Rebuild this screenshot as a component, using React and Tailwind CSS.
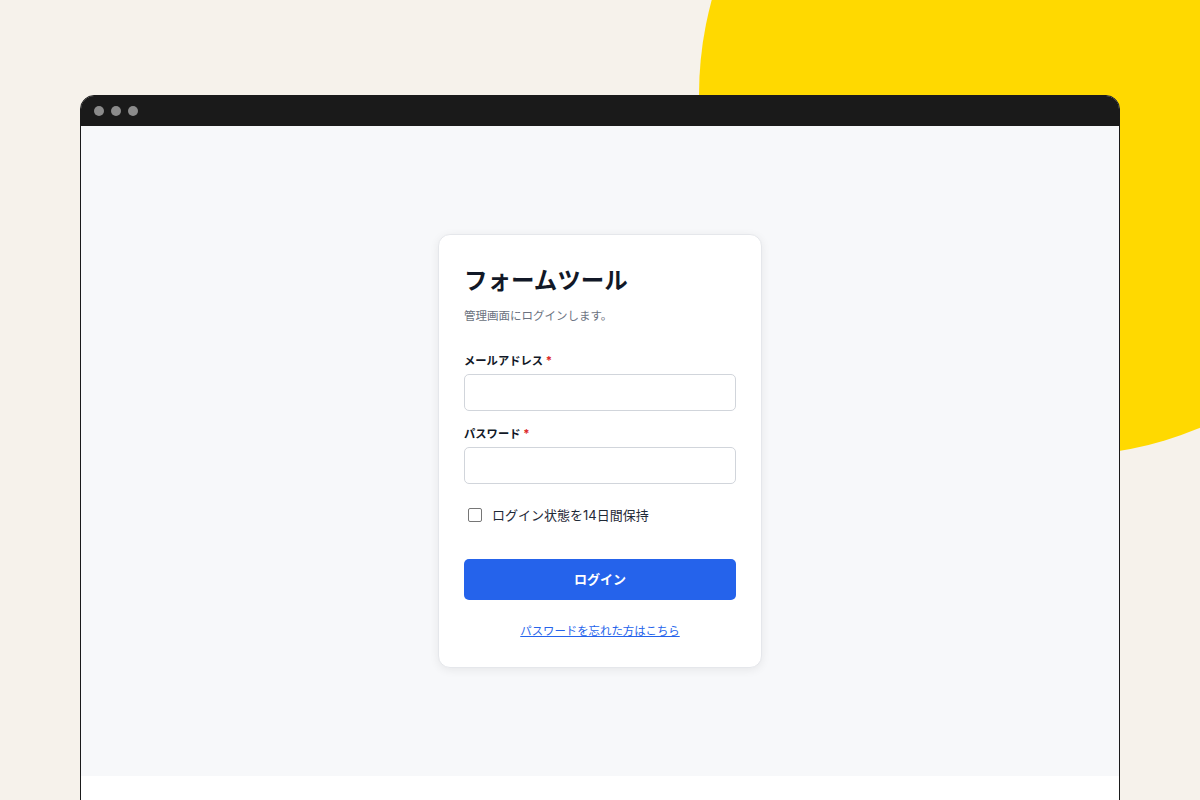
import React from 'react'

export default function App() {
  return (
    <div className="relative w-[1200px] h-[800px] overflow-hidden bg-[#f6f2eb]" style={{ fontFamily: 'Inter, "Noto Sans CJK JP", sans-serif' }}>
      {/* yellow blob */}
      <div className="absolute left-[699px] top-[-266px] w-[722px] h-[722px] rounded-full bg-[#ffd900]" />

      {/* browser window */}
      <div className="absolute left-[80px] top-[95px] w-[1040px] h-[760px] rounded-t-[14px] border border-[#1a1a1a] bg-white overflow-hidden">
        <div className="h-[30px] bg-[#1a1a1a] flex items-center gap-[7px] pl-[13px]">
          <span className="w-[10px] h-[10px] rounded-full bg-[#8b8b8b]" />
          <span className="w-[10px] h-[10px] rounded-full bg-[#8b8b8b]" />
          <span className="w-[10px] h-[10px] rounded-full bg-[#8b8b8b]" />
        </div>

        <div className="h-[650px] bg-[#f7f8fa] flex items-center justify-center">
          <div className="w-[324px] bg-white border border-[#e5e7eb] rounded-[12px] shadow-[0_2px_10px_rgba(0,0,0,0.07)] px-[25px] pt-[29px] pb-[26px]">
            <h1 className="text-[23.5px] leading-[34px] font-bold text-[#111827]">フォームツール</h1>
            <p className="mt-[10px] text-[11.5px] leading-[16px] text-[#6b7280]">管理画面にログインします。</p>

            <div className="mt-[29px]">
              <label className="block text-[11.3px] leading-[16px] font-bold text-[#111827]">
                メールアドレス <span className="text-[#dc2626]">*</span>
              </label>
              <input type="email" className="mt-[5px] block w-full h-[37px] rounded-[5px] border border-[#d1d5db] bg-white outline-none" />
            </div>

            <div className="mt-[15px]">
              <label className="block text-[11.3px] leading-[16px] font-bold text-[#111827]">
                パスワード <span className="text-[#dc2626]">*</span>
              </label>
              <input type="password" className="mt-[5px] block w-full h-[37px] rounded-[5px] border border-[#d1d5db] bg-white outline-none" />
            </div>

            <label className="mt-[22px] flex items-center gap-[10px] pl-[4px]">
              <span className="w-[14px] h-[14px] rounded-[2px] border border-[#767676] bg-white" />
              <span className="text-[13px] leading-[18px] text-[#1f2937]">ログイン状態を14日間保持</span>
            </label>

            <button className="mt-[35px] w-full h-[41px] rounded-[5px] bg-[#2563eb] text-white text-[13px] font-bold">
              ログイン
            </button>

            <div className="mt-[17px] text-center">
              <a href="#" className="text-[11.4px] leading-[18px] text-[#2563eb] underline">パスワードを忘れた方はこちら</a>
            </div>
          </div>
        </div>
      </div>
    </div>
  )
}
